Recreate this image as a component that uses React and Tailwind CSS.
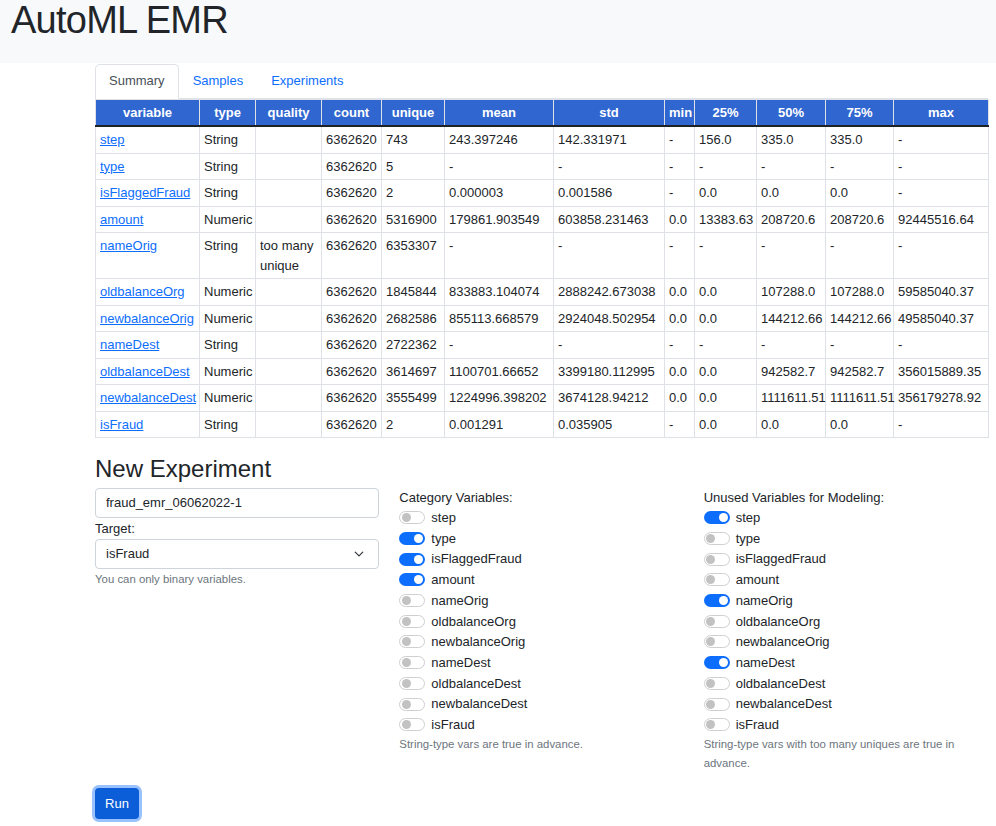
import React from "react";

const font = { fontFamily: '"Liberation Sans", Arial, sans-serif' };

const columns = [
  { name: "variable", w: "w-[104px]" },
  { name: "type", w: "w-[56px]" },
  { name: "quality", w: "w-[66px]" },
  { name: "count", w: "w-[60px]" },
  { name: "unique", w: "w-[63px]" },
  { name: "mean", w: "w-[109px]" },
  { name: "std", w: "w-[111px]" },
  { name: "min", w: "w-[30px]" },
  { name: "25%", w: "w-[62px]" },
  { name: "50%", w: "w-[69px]" },
  { name: "75%", w: "w-[68px]" },
  { name: "max", w: "w-[95px]" },
];

const rows = [
  ["step", "String", "", "6362620", "743", "243.397246", "142.331971", "-", "156.0", "335.0", "335.0", "-"],
  ["type", "String", "", "6362620", "5", "-", "-", "-", "-", "-", "-", "-"],
  ["isFlaggedFraud", "String", "", "6362620", "2", "0.000003", "0.001586", "-", "0.0", "0.0", "0.0", "-"],
  ["amount", "Numeric", "", "6362620", "5316900", "179861.903549", "603858.231463", "0.0", "13383.63", "208720.6", "208720.6", "92445516.64"],
  ["nameOrig", "String", "too many unique", "6362620", "6353307", "-", "-", "-", "-", "-", "-", "-"],
  ["oldbalanceOrg", "Numeric", "", "6362620", "1845844", "833883.104074", "2888242.673038", "0.0", "0.0", "107288.0", "107288.0", "59585040.37"],
  ["newbalanceOrig", "Numeric", "", "6362620", "2682586", "855113.668579", "2924048.502954", "0.0", "0.0", "144212.66", "144212.66", "49585040.37"],
  ["nameDest", "String", "", "6362620", "2722362", "-", "-", "-", "-", "-", "-", "-"],
  ["oldbalanceDest", "Numeric", "", "6362620", "3614697", "1100701.66652", "3399180.112995", "0.0", "0.0", "942582.7", "942582.7", "356015889.35"],
  ["newbalanceDest", "Numeric", "", "6362620", "3555499", "1224996.398202", "3674128.94212", "0.0", "0.0", "1111611.51", "1111611.51", "356179278.92"],
  ["isFraud", "String", "", "6362620", "2", "0.001291", "0.035905", "-", "0.0", "0.0", "0.0", "-"],
];

const vars = rows.map((r) => r[0]);
const categoryOn = ["type", "isFlaggedFraud", "amount"];
const unusedOn = ["step", "nameOrig", "nameDest"];

function Switch({ on, label }) {
  return (
    <div className="flex items-center h-[20.7px]">
      {on ? (
        <span className="w-[26px] h-[13px] rounded-full bg-[#0d6efd] flex items-center justify-end px-[2px]">
          <span className="w-[9px] h-[9px] rounded-full bg-white" />
        </span>
      ) : (
        <span className="w-[26px] h-[13px] rounded-full bg-white border border-[#cfcfcf] flex items-center px-[1.5px]">
          <span className="w-[9px] h-[9px] rounded-full bg-[#c2c2c2]" />
        </span>
      )}
      <span className="ml-[6px] text-[13px] text-[#212529]">{label}</span>
    </div>
  );
}

function SwitchGroup({ title, active, help }) {
  return (
    <div>
      <div className="text-[13px] leading-[19.5px] text-[#212529]">{title}</div>
      {vars.map((v) => (
        <Switch key={v} label={v} on={active.includes(v)} />
      ))}
      <p className="text-[11.4px] leading-[19px] text-[#6c757d]">{help}</p>
    </div>
  );
}

export default function App() {
  return (
    <div className="min-h-screen bg-white text-[#212529]" style={font}>
      {/* Header */}
      <div className="bg-[#f8f9fa] h-[63px] px-[11px]">
        <h1 className="text-[38px] leading-[40px] tracking-[-0.02em]">AutoML EMR</h1>
      </div>

      <div className="ml-[95px] w-[893px]">
        {/* Tabs */}
        <div className="flex mt-[1px] border-b border-[#dee2e6] text-[13px] leading-[19.5px]">
          <span className="px-[13px] py-[6px] border border-[#dee2e6] border-b-white -mb-px rounded-t-[5px] text-[#495057] bg-white">
            Summary
          </span>
          <span className="px-[13px] py-[6px] border border-transparent text-[#0d6efd]">Samples</span>
          <span className="px-[13px] py-[6px] border border-transparent text-[#0d6efd]">Experiments</span>
        </div>

        {/* Summary table */}
        <table className="table-fixed w-full border-collapse text-[13px] leading-[19.5px]">
          <colgroup>
            {columns.map((c) => (
              <col key={c.name} className={c.w} />
            ))}
          </colgroup>
          <thead>
            <tr className="bg-[#2f66d0] text-white">
              {columns.map((c) => (
                <th key={c.name} className="border border-[#dee2e6] border-b-[#1e2125] border-b-2 px-[4px] py-[3px] font-bold text-center">
                  {c.name}
                </th>
              ))}
            </tr>
          </thead>
          <tbody>
            {rows.map((r) => (
              <tr key={r[0]}>
                {r.map((cell, i) => (
                  <td key={i} className="border border-[#dee2e6] px-[4px] py-[3px] align-top">
                    {i === 0 ? (
                      <a href="#" className="text-[#0d6efd] underline">
                        {cell}
                      </a>
                    ) : (
                      cell
                    )}
                  </td>
                ))}
              </tr>
            ))}
          </tbody>
        </table>

        {/* New Experiment */}
        <h3 className="mt-[16px] mb-[5px] text-[24px] leading-[29px] font-medium">New Experiment</h3>

        <div className="grid grid-cols-3 gap-x-[20px]">
          <div>
            <div className="h-[30px] border border-[#ced4da] rounded-[4px] px-[10px] flex items-center text-[13px]">
              fraud_emr_06062022-1
            </div>
            <div className="mt-[1px] text-[13px] leading-[19.5px]">Target:</div>
            <div className="h-[30px] border border-[#ced4da] rounded-[4px] pl-[10px] pr-[14px] flex items-center justify-between text-[13px]">
              <span>isFraud</span>
              <svg width="10" height="10" viewBox="0 0 16 16" fill="none" stroke="#343a40" strokeWidth="2" strokeLinecap="round" strokeLinejoin="round">
                <path d="M2 5l6 6 6-6" />
              </svg>
            </div>
            <p className="mt-[2px] text-[11.4px] leading-[17px] text-[#6c757d]">You can only binary variables.</p>
          </div>

          <SwitchGroup title="Category Variables:" active={categoryOn} help="String-type vars are true in advance." />
          <SwitchGroup
            title="Unused Variables for Modeling:"
            active={unusedOn}
            help="String-type vars with too many uniques are true in advance."
          />
        </div>

        <button className="mt-[15px] w-[44px] h-[31px] rounded-[4px] bg-[#0b5ed7] text-white text-[13px] shadow-[0_0_0_3px_rgba(49,132,253,0.5)]">
          Run
        </button>
      </div>
    </div>
  );
}
